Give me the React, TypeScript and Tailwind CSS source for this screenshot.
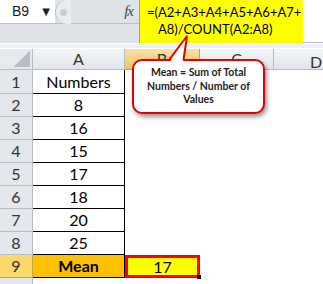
import React from 'react';

const rows = [
  { n: '1', v: 'Numbers' },
  { n: '2', v: '8' },
  { n: '3', v: '16' },
  { n: '4', v: '15' },
  { n: '5', v: '17' },
  { n: '6', v: '18' },
  { n: '7', v: '20' },
  { n: '8', v: '25' },
];

const App = () => {
  return (
    <div className="relative w-[323px] h-[284px] overflow-hidden bg-white font-['Lato',sans-serif] text-black">
      {/* formula bar */}
      <div className="flex h-[43px] bg-[#dfe3e8]">
        <div className="w-[139px] flex flex-col">
          <div className="h-[24px] flex border-b border-[#b9c0ca]">
            <div className="w-[55px] shrink-0 bg-white flex items-center pl-[12px] text-[14px] text-[#1a1a1a]">
              <span className="font-['Liberation_Sans',sans-serif]">B9</span>
              <span className="ml-[13px] text-[10px] leading-none text-[#222] font-['DejaVu_Sans',sans-serif]">▼</span>
            </div>
            <div className="w-[16px] shrink-0 h-[24px] bg-[#e9ecf0] rounded-l-[12px] border-l border-[#b9c0ca] flex items-center justify-center">
              <div className="w-[7px] h-[7px] rounded-full bg-[#c9cdd3]" />
            </div>
            <div className="flex-1 flex items-center justify-end pr-[6px]">
              <span className="font-['Liberation_Serif',serif] italic text-[15px] text-[#444] tracking-[-1px]">fx</span>
            </div>
          </div>
        </div>
        <div className="w-[164px] bg-[#ffff00] border-l border-[#b5b500] pt-[4px] pl-[7px] text-[13px] leading-[17px]">
          <div>=(A2+A3+A4+A5+A6+A7+</div>
          <div className="pl-[11px]">A8)/COUNT(A2:A8)</div>
        </div>
        <div className="flex-1 bg-white border-b border-[#b9c0ca]" />
      </div>
      <div className="h-[6px] border-t border-white bg-[#eef0f3] border-b border-[#c5cbd3]" />

      {/* sheet */}
      <div className="grid grid-cols-[33px_92px_75px_74px_1fr] grid-rows-[21px_24px_repeat(8,23px)_10px]">
        <div className="bg-[#e6eaef] border-r border-b border-[#b7bdc6] flex items-end justify-end p-[2px]">
          <div className="w-[16px] h-[16px] bg-linear-to-br from-transparent from-50% to-[#b9bec6] to-50%" />
        </div>
        <div className="bg-gradient-to-b from-[#f3f5f8] to-[#e1e5ea] border-r border-b border-[#b7bdc6] flex items-center justify-center text-[16px] text-[#333]">A</div>
        <div className="bg-gradient-to-b from-[#fbe1a6] to-[#f2c25c] border-r border-b border-[#c9a24c] flex items-center justify-center text-[16px] text-[#333]">B</div>
        <div className="bg-gradient-to-b from-[#f3f5f8] to-[#e1e5ea] border-r border-b border-[#b7bdc6] flex items-center justify-center text-[16px] text-[#333]">C</div>
        <div className="bg-gradient-to-b from-[#f3f5f8] to-[#e1e5ea] border-b border-[#b7bdc6] flex items-start pt-[1px] pl-[36px] text-[16px] text-[#333]">D</div>

        {rows.map((r) => (
          <React.Fragment key={r.n}>
            <div className="bg-[#e4e8ed] border-r border-b border-[#b7bdc6] flex items-center justify-center text-[16px] text-[#333]">{r.n}</div>
            <div className="border-r border-b border-black flex items-center justify-center text-[16px]">{r.v}</div>
            <div />
            <div />
            <div />
          </React.Fragment>
        ))}

        <div className="bg-[#fcd86b] border-r border-b border-[#c9a24c] flex items-center justify-center text-[16px] text-[#333]">9</div>
        <div className="bg-[#ffc000] border-r border-b border-black flex items-center justify-center text-[16px] font-bold">Mean</div>
        <div className="relative bg-[#ffff00] border-[3px] border-[#ff0000] flex items-center justify-center text-[16px]">
          17
          <div className="absolute -right-[4px] -bottom-[4px] w-[4px] h-[4px] bg-black" />
        </div>
        <div />
        <div />

        <div className="bg-[#e4e8ed] border-r border-[#b7bdc6]" />
        <div />
        <div />
        <div />
        <div />
      </div>

      {/* callout */}
      <div className="absolute left-[132px] top-[59px] w-[133px] h-[55px] rounded-[10px] border-2 border-[#e60000] bg-white shadow-[2px_3px_4px_rgba(0,0,0,0.4)] flex flex-col items-center justify-center text-[10.5px] leading-[13.5px] font-bold text-[#222]">
        <div>Mean = Sum of Total</div>
        <div>Numbers / Number of</div>
        <div>Values</div>
      </div>
      <svg className="absolute left-[160px] top-[30px]" width="35" height="35" viewBox="0 0 35 35">
        <polygon points="10,32 27,6 23,32" fill="#ffffff" />
        <polyline points="9,30 27,6 23.5,30" fill="none" stroke="#e60000" strokeWidth="2" strokeLinejoin="miter" />
      </svg>
    </div>
  );
};

export default App;
